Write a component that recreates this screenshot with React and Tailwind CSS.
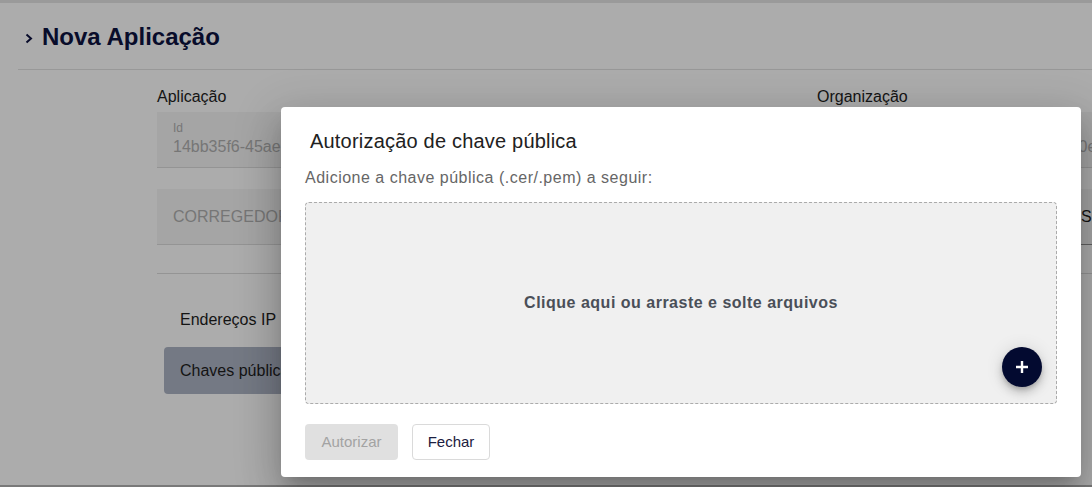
export default function App() {
  return (
    <div className="relative h-[487px] w-[1092px] overflow-hidden bg-white font-['Liberation_Sans',Arial,sans-serif]">
      <div className="flex h-full flex-col">
        <div className="h-[3px] bg-[#e4e4e4]" />
        <header className="ml-[18px] flex h-[67px] items-center gap-[9px] border-b border-[#e2e2e2] pl-[7px] pt-[2px]">
          <svg width="8" height="11" viewBox="0 0 8 11" fill="none" className="mt-[2px]">
            <path d="M1.5 1.5 L6 5.5 L1.5 9.5" stroke="#0d1240" strokeWidth="2" />
          </svg>
          <h1 className="text-[24px] font-bold leading-[28px] text-[#0d1240]">Nova Aplicação</h1>
        </header>

        <main className="ml-[157px] flex-1 pt-[17px]">
          <div className="grid w-[1300px] grid-cols-[640px_640px] gap-x-5">
            <div>
              <p className="mb-[5px] text-[16px] leading-5 text-[#1e1e1e]">Aplicação</p>
              <div className="h-[56px] border-b border-[#dcdcdc] bg-[#f5f5f5] px-4 pt-[9px]">
                <p className="text-[12px] leading-[14px] text-[#b0b0b0]">Id</p>
                <p className="mt-[3px] text-[16px] leading-[18px] text-[#b0b0b0]">14bb35f6-45ae-4c2b-9d7e-3f81a6c02b5d</p>
              </div>
              <div className="mt-[21px] flex h-[56px] items-center border-b border-[#dcdcdc] bg-[#f5f5f5] px-4">
                <p className="text-[16px] uppercase text-[#b0b0b0]">CORREGEDORIA GERAL DA JUSTIÇA</p>
              </div>
            </div>
            <div>
              <p className="mb-[5px] text-[16px] leading-5 text-[#1e1e1e]">Organização</p>
              <div className="h-[56px] border-b border-[#dcdcdc] bg-[#f5f5f5] px-4 pt-[9px]">
                <p className="text-[12px] leading-[14px] text-[#b0b0b0]">Id</p>
                <p className="mt-[3px] text-[16px] leading-[18px] text-[#b0b0b0]">7c1d4a02-9f3b-4e6a-b2c8-5a91dc0e37f6</p>
              </div>
              <div className="mt-[21px] flex h-[56px] items-center border-b border-[#8f8f8f] bg-[#f5f5f5] px-4">
                <p className="text-[16px] text-[#1e1e1e]">SISTEMA ÚNICO DE SAÚDE - SUS</p>
              </div>
            </div>
          </div>

          <div className="mt-[28px] w-[1300px] border-t border-[#dcdcdc]" />

          <nav className="ml-[7px] mt-[22px] flex w-[220px] flex-col gap-1">
            <div className="flex h-[47px] items-center rounded-[4px] px-4 text-[16px] text-[#1e1e1e]">Endereços IP</div>
            <div className="flex h-[47px] items-center rounded-[4px] bg-[#adb4c4] px-4 text-[16px] text-[#1e1e1e]">Chaves públicas</div>
          </nav>
        </main>
        <div className="h-[2px] bg-[#b4b4b4]" />
      </div>

      <div className="absolute inset-0 bg-[rgba(0,0,0,0.325)]" />

      <div className="absolute left-[281px] top-[107px] flex h-[370px] w-[800px] flex-col rounded-[4px] bg-white px-6 pt-[20px] shadow-[0_11px_15px_-7px_rgba(0,0,0,0.2),0_24px_38px_3px_rgba(0,0,0,0.14),0_9px_46px_8px_rgba(0,0,0,0.12)]">
        <h2 className="ml-[5px] text-[20px] leading-7 tracking-[0.2px] text-[#212121]">Autorização de chave pública</h2>
        <p className="mt-[11px] text-[16px] leading-6 tracking-[0.5px] text-[#666666]">Adicione a chave pública (.cer/.pem) a seguir:</p>
        <div className="relative mt-[12px] flex h-[202px] items-center justify-center rounded-[4px] border border-dashed border-[#ababab] bg-[#f0f0f0]">
          <p className="text-[16px] font-bold tracking-[0.5px] text-[#4a4f58]">Clique aqui ou arraste e solte arquivos</p>
          <button className="absolute bottom-[16px] right-[14px] flex h-10 w-10 items-center justify-center rounded-full bg-[#030a30] shadow-[0_3px_5px_-1px_rgba(0,0,0,0.2),0_6px_10px_0_rgba(0,0,0,0.14),0_1px_18px_0_rgba(0,0,0,0.12)]">
            <svg width="16" height="16" viewBox="0 0 16 16">
              <path d="M8 2 V14 M2 8 H14" stroke="#ffffff" strokeWidth="2.4" />
            </svg>
          </button>
        </div>
        <div className="mt-[20px] flex gap-[14px]">
          <button className="h-[36px] w-[93px] rounded-[4px] bg-[#e0e0e0] text-[15px] text-[#a3a3a3]">Autorizar</button>
          <button className="h-[36px] w-[78px] rounded-[4px] border border-[#dadada] bg-white text-[15px] text-[#1c2040]">Fechar</button>
        </div>
      </div>
    </div>
  );
}
